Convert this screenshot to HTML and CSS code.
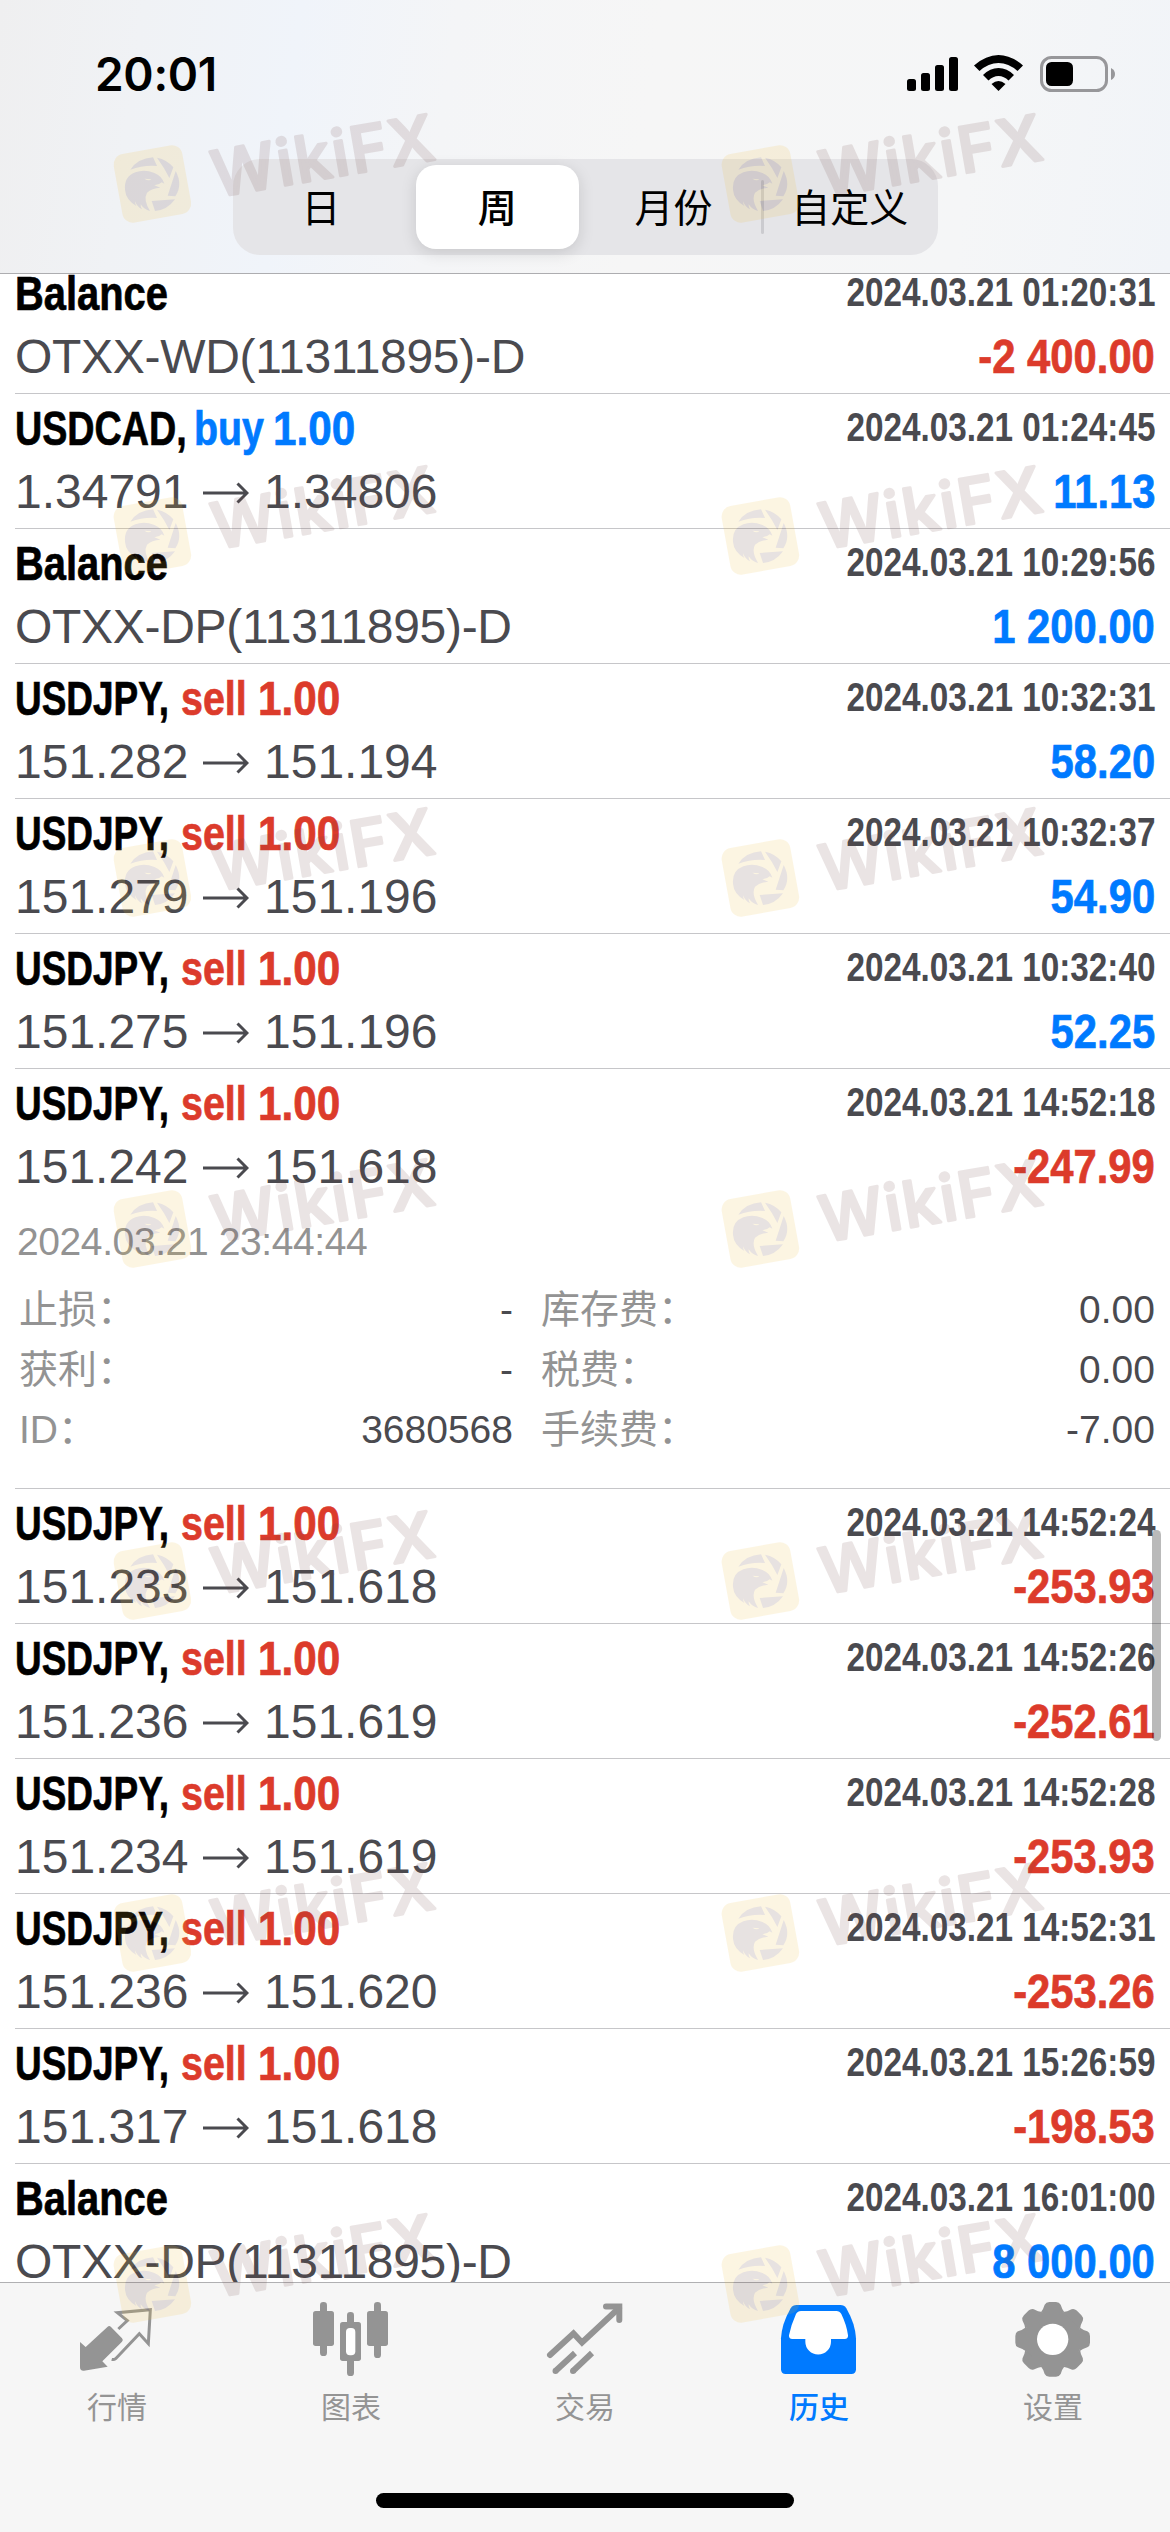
FILE: index.html
```
<!DOCTYPE html>
<html lang="zh-CN">
<head>
<meta charset="utf-8">
<title>历史</title>
<link rel="stylesheet" href="styles.css">
</head>
<body>
<svg class="defs" aria-hidden="true">
  <defs>
    <symbol id="arrow" viewBox="0 0 47 22"><path d="M1 11H45M35.5 1.5L45 11L35.5 20.5" fill="none" stroke="currentColor" stroke-width="3"/></symbol>
    <symbol id="mark" viewBox="0 90 1005 370">
      <rect x="31.500" y="222.500" width="209" height="209" rx="32" transform="rotate(-10.300 136 327)" fill="#f1be37"/>
      <g fill="#5b3730">
        <path d="M70 284Q92 250 138 247L150 273Q108 270 70 284Z"/>
        <path d="M150 248Q180 254 199 277L187 309L171 280Z"/>
        <path d="M206 288Q228 330 205 364L182 362Z"/>
        <path d="M134 378L204 373Q180 406 144 408Z"/>
        <path d="M54 345Q50 305 85 292Q112 282 142 294Q164 302 172 326L164 322Q156 330 142 331L160 338Q134 340 120 353Q108 374 129 408Q111 404 101 388Q100 397 105 403Q91 397 84 379Q84 388 88 393Q56 374 54 345Z"/>
      </g>
      <path d="M112 311L133 313Q125 319 112 311Z" fill="#f1be37"/>
      <text class="mark-text" transform="translate(327 367) rotate(-9.800)" textLength="672" lengthAdjust="spacing">WikiFX</text>
    </symbol>
  </defs>
</svg>
<div class="screen">
  <header class="header">
    <div class="status">
      <span class="clock">20:01</span>
      <svg class="status-icons" viewBox="0 0 210 40" width="210" height="40">
        <rect x="0" y="25" width="9" height="12" rx="2.500"/><rect x="14" y="19" width="9" height="18" rx="2.500"/><rect x="28" y="11" width="9" height="26" rx="2.500"/><rect x="42" y="3" width="9" height="34" rx="2.500"/>
        <path d="M67 11.500Q79 1 91.500 1T116 11.500L110.500 17Q101.500 9 91.500 9T72.500 17Z"/>
        <path d="M76 21Q83 14 91.500 14T107 21L101.500 26.500Q97 22 91.500 22T81.500 26.500Z"/>
        <path d="M84.500 30Q91.500 24 98.500 30L91.500 37Z"/>
        <rect x="134.500" y="3.500" width="65" height="33" rx="10" fill="none" stroke="#97979a" stroke-width="3"/>
        <rect x="139" y="8" width="27" height="24" rx="5.500"/>
        <path d="M204 14Q208 16 208 20T204 26Z" fill="#97979a"/>
      </svg>
    </div>
    <div class="segments">
      <span class="segment">日</span>
      <span class="segment selected">周</span>
      <span class="segment">月份</span>
      <span class="segment divided">自定义</span>
    </div>
  </header>

  <main class="list">
    <section class="row"><div class="line"><b class="symbol balance">Balance</b><time class="time">2024.03.21 01:20:31</time></div><div class="line"><span class="note">OTXX-WD(11311895)-D</span><b class="amount loss">-2 400.00</b></div></section>
    <section class="row"><div class="line"><b class="symbol cad">USDCAD,</b><b class="side buy">buy</b><b class="volume gain">1.00</b><time class="time">2024.03.21 01:24:45</time></div><div class="line"><span class="price">1.34791</span><svg class="arrow"><use href="#arrow"/></svg><span class="price">1.34806</span><b class="amount gain">11.13</b></div></section>
    <section class="row"><div class="line"><b class="symbol balance">Balance</b><time class="time">2024.03.21 10:29:56</time></div><div class="line"><span class="note">OTXX-DP(11311895)-D</span><b class="amount gain">1 200.00</b></div></section>
    <section class="row"><div class="line"><b class="symbol">USDJPY,</b><b class="side">sell</b><b class="volume loss">1.00</b><time class="time">2024.03.21 10:32:31</time></div><div class="line"><span class="price">151.282</span><svg class="arrow"><use href="#arrow"/></svg><span class="price">151.194</span><b class="amount gain">58.20</b></div></section>
    <section class="row"><div class="line"><b class="symbol">USDJPY,</b><b class="side">sell</b><b class="volume loss">1.00</b><time class="time">2024.03.21 10:32:37</time></div><div class="line"><span class="price">151.279</span><svg class="arrow"><use href="#arrow"/></svg><span class="price">151.196</span><b class="amount gain">54.90</b></div></section>
    <section class="row"><div class="line"><b class="symbol">USDJPY,</b><b class="side">sell</b><b class="volume loss">1.00</b><time class="time">2024.03.21 10:32:40</time></div><div class="line"><span class="price">151.275</span><svg class="arrow"><use href="#arrow"/></svg><span class="price">151.196</span><b class="amount gain">52.25</b></div></section>
    <section class="row open"><div class="line"><b class="symbol">USDJPY,</b><b class="side">sell</b><b class="volume loss">1.00</b><time class="time">2024.03.21 14:52:18</time></div><div class="line"><span class="price">151.242</span><svg class="arrow"><use href="#arrow"/></svg><span class="price">151.618</span><b class="amount loss">-247.99</b></div>
      <div class="details">
        <div class="closed">2024.03.21 23:44:44</div>
        <dl class="fields">
          <dt>止损：</dt><dd>-</dd><dt class="right">库存费：</dt><dd>0.00</dd>
          <dt>获利：</dt><dd>-</dd><dt class="right">税费：</dt><dd>0.00</dd>
          <dt>ID：</dt><dd>3680568</dd><dt class="right">手续费：</dt><dd>-7.00</dd>
        </dl>
      </div>
    </section>
    <section class="row"><div class="line"><b class="symbol">USDJPY,</b><b class="side">sell</b><b class="volume loss">1.00</b><time class="time">2024.03.21 14:52:24</time></div><div class="line"><span class="price">151.233</span><svg class="arrow"><use href="#arrow"/></svg><span class="price">151.618</span><b class="amount loss">-253.93</b></div></section>
    <section class="row"><div class="line"><b class="symbol">USDJPY,</b><b class="side">sell</b><b class="volume loss">1.00</b><time class="time">2024.03.21 14:52:26</time></div><div class="line"><span class="price">151.236</span><svg class="arrow"><use href="#arrow"/></svg><span class="price">151.619</span><b class="amount loss">-252.61</b></div></section>
    <section class="row"><div class="line"><b class="symbol">USDJPY,</b><b class="side">sell</b><b class="volume loss">1.00</b><time class="time">2024.03.21 14:52:28</time></div><div class="line"><span class="price">151.234</span><svg class="arrow"><use href="#arrow"/></svg><span class="price">151.619</span><b class="amount loss">-253.93</b></div></section>
    <section class="row"><div class="line"><b class="symbol">USDJPY,</b><b class="side">sell</b><b class="volume loss">1.00</b><time class="time">2024.03.21 14:52:31</time></div><div class="line"><span class="price">151.236</span><svg class="arrow"><use href="#arrow"/></svg><span class="price">151.620</span><b class="amount loss">-253.26</b></div></section>
    <section class="row"><div class="line"><b class="symbol">USDJPY,</b><b class="side">sell</b><b class="volume loss">1.00</b><time class="time">2024.03.21 15:26:59</time></div><div class="line"><span class="price">151.317</span><svg class="arrow"><use href="#arrow"/></svg><span class="price">151.618</span><b class="amount loss">-198.53</b></div></section>
    <section class="row"><div class="line"><b class="symbol balance">Balance</b><time class="time">2024.03.21 16:01:00</time></div><div class="line"><span class="note">OTXX-DP(11311895)-D</span><b class="amount gain">8 000.00</b></div></section>
  </main>

  <nav class="tabs">
    <div class="tab">
      <svg class="icon" viewBox="51 30 240 234"><path d="M60 156L77 171L143 110Q148 106 153 111L186 145Q191 150 186 155L127 214L143 230L72 242Q60 243 60 232Z" fill="currentColor"/><path d="M175 117L202 92L172 68L271 59L265 161L238 131L167 206Q162 210 155 208" fill="none" stroke="currentColor" stroke-width="9"/></svg>
      <span>行情</span>
    </div>
    <div class="tab">
      <svg class="icon" viewBox="753 30 240 234" fill="currentColor"><rect x="780" y="36" width="21" height="162" rx="10"/><rect x="759" y="63" width="63" height="105" rx="8"/><rect x="861" y="66" width="21" height="192" rx="10"/><rect x="840" y="96" width="63" height="117" rx="8"/><rect x="858" y="114" width="28" height="82" rx="12" fill="#fff"/><rect x="942" y="36" width="21" height="168" rx="10"/><rect x="921" y="63" width="63" height="105" rx="8"/></svg>
      <span>图表</span>
    </div>
    <div class="tab">
      <svg class="icon" viewBox="545 2300 80 78" fill="none" stroke="currentColor" stroke-width="6"><path d="M550 2355L573.500 2333.500L582 2342.500L619 2308" stroke-linecap="round"/><path d="M606 2306.500H619.300V2320" stroke-linecap="round"/><path d="M555.500 2371L575 2353M573 2371L592 2353" /><path d="M555.500 2371h.01M573 2371h.01" stroke-linecap="round"/></svg>
      <span>交易</span>
    </div>
    <div class="tab active">
      <svg class="icon" viewBox="177 30 240 234"><path d="M183 145Q185 102 212 55Q218 45 230 45H361Q373 45 379 55Q406 102 408 145V238Q408 252 394 252H197Q183 252 183 238Z" fill="currentColor"/><path d="M243 63H349Q359 63 364 72Q380 105 384 136Q385 147 374 147H333V155A38.500 38.500 0 0 1 256 155V147H217Q206 147 207 136Q213 105 228 72Q233 63 243 63Z" fill="#fff"/></svg>
      <span>历史</span>
    </div>
    <div class="tab">
      <svg class="icon" viewBox="-119 -118 240 234"><defs><path id="tooth" d="M-36-80Q-28-90-24-104Q-20-112-10-112H10Q20-112 24-104Q28-90 36-80Z"/></defs><g fill="currentColor"><circle r="87"/><use href="#tooth"/><use href="#tooth" transform="rotate(45)"/><use href="#tooth" transform="rotate(90)"/><use href="#tooth" transform="rotate(135)"/><use href="#tooth" transform="rotate(180)"/><use href="#tooth" transform="rotate(225)"/><use href="#tooth" transform="rotate(270)"/><use href="#tooth" transform="rotate(315)"/></g><circle r="47" fill="#fff"/></svg>
      <span>设置</span>
    </div>
    <div class="home"></div>
  </nav>

  <div class="scrollbar"></div>
  <div class="marks" aria-hidden="true">
    <svg style="top:105px"><use href="#mark"/></svg><svg class="second" style="top:105px"><use href="#mark"/></svg>
    <svg style="top:457px"><use href="#mark"/></svg><svg class="second" style="top:457px"><use href="#mark"/></svg>
    <svg style="top:799px"><use href="#mark"/></svg><svg class="second" style="top:799px"><use href="#mark"/></svg>
    <svg style="top:1150px"><use href="#mark"/></svg><svg class="second" style="top:1150px"><use href="#mark"/></svg>
    <svg style="top:1502px"><use href="#mark"/></svg><svg class="second" style="top:1502px"><use href="#mark"/></svg>
    <svg style="top:1854px"><use href="#mark"/></svg><svg class="second" style="top:1854px"><use href="#mark"/></svg>
    <svg style="top:2205px"><use href="#mark"/></svg><svg class="second" style="top:2205px"><use href="#mark"/></svg>
  </div>
</div>
</body>
</html>
```
FILE: styles.css
```
* { box-sizing: border-box; }

body {
  margin: 0;
  background: #fff;
  font-family: "Liberation Sans", "Noto Sans CJK SC", sans-serif;
  color: #4a4a4f;
}

.defs { position: absolute; width: 0; height: 0; }

.screen {
  position: relative;
  width: 1170px;
  height: 2532px;
  display: flex;
  flex-direction: column;
  overflow: hidden;
}

/* Header */
.header {
  flex: none;
  height: 274px;
  border-bottom: 1px solid #adadb0;
  background: linear-gradient(98deg, #efeff0 0%, #f0f2f5 12%, #f0f4fa 25%, #f4f5f7 38%, #f6f6f6 55%, #f5f6f7 82%, #f1f4f8 100%);
}

.status {
  height: 159px;
  display: flex;
  justify-content: space-between;
  align-items: flex-start;
  padding: 54px 53px 0 95px;
}

.clock {
  font: 600 46px/40px "Inter", sans-serif;
  letter-spacing: -0.3px;
  color: #000;
}

.segments {
  width: 705px;
  height: 96px;
  margin-left: 233px;
  display: grid;
  grid-template-columns: repeat(4, 1fr);
  border-radius: 27px;
  background: #e5e5e8;
}

.segment {
  display: flex;
  align-items: center;
  justify-content: center;
  padding-bottom: 5px;
  font: 400 39px/56px "Noto Sans CJK SC", sans-serif;
  color: #000;
}

.selected {
  margin: 6px 7px;
  border-radius: 20px;
  background: #fff;
  font-weight: 500;
  box-shadow: 0 4px 16px rgba(0, 0, 0, .13);
}

.divided { position: relative; }

.divided::before {
  content: "";
  position: absolute;
  left: -1px;
  top: 21px;
  width: 3px;
  height: 54px;
  border-radius: 2px;
  background: #cbcbcf;
}

/* Deals */
.list { flex: 1; min-height: 0; overflow: hidden; }

.row {
  height: 135px;
  margin-left: 15px;
  padding: 8px 15px 0 0;
  border-bottom: 1px solid #c6c6c9;
}

.row:first-child { margin-top: -15px; }
.row.open { height: 420px; }

.line {
  height: 54px;
  display: flex;
  align-items: flex-start;
  font-size: 48px;
  line-height: 54px;
  white-space: nowrap;
}

.line + .line { margin-top: 9px; }

/* Condensed faces: each box has its drawn width, the glyphs are squeezed into it */
.symbol, .side, .volume { transform-origin: left; color: #000; }
.symbol, .side, .volume, .amount { -webkit-text-stroke: .7px currentColor; }
.symbol { width: 166px; transform: scaleX(.77); }
.symbol.balance { transform: scaleX(.83); }
.symbol.cad { width: 179px; transform: scaleX(.785); }
.side { width: 77px; transform: scaleX(.82); color: #dc3b2b; }
.side.buy { width: 79px; color: #007aff; }
.volume { width: 90px; transform: scaleX(.88); }
.volume.gain, .amount.gain { color: #007aff; }
.volume.loss, .amount.loss { color: #dc3b2b; }

.time {
  margin-left: auto;
  font-size: 40px;
  font-weight: 700;
  line-height: 51px;
  transform: scaleX(.832);
  transform-origin: right;
}

.amount { margin-left: auto; transform: scaleX(.87); transform-origin: right; }

.note { letter-spacing: -.3px; }
.price { width: 172px; }
.arrow { width: 47px; height: 22px; margin: 17px 15px 0; }

/* Expanded deal */
.details { padding-top: 26px; font-size: 39px; }
.closed { padding-left: 2px; line-height: 44px; letter-spacing: -.4px; color: #939393; }

.fields {
  margin: 16px 0 0;
  padding-left: 4px;
  display: grid;
  grid-template-columns: 160px 334px 200px 1fr;
  line-height: 60px;
}

.fields dt { height: 60px; color: #939393; }
.fields .right { padding-left: 28px; }
.fields dd { height: 60px; margin: 0; text-align: right; }

/* Tab bar */
.tabs {
  flex: none;
  height: 250px;
  display: grid;
  grid-template-columns: repeat(5, 1fr);
  grid-template-rows: 210px 15px;
  border-top: 1px solid #b0b0b2;
  background: #f6f6f6;
}

.tab {
  display: flex;
  flex-direction: column;
  align-items: center;
  padding-top: 17px;
  color: #949494;
  font: 400 30px/44px "Noto Sans CJK SC", sans-serif;
}

.tab span { margin-top: 5px; }
.active { color: #007aff; font-weight: 500; }
.icon { width: 80px; height: 78px; }

.home {
  grid-column: 1 / -1;
  justify-self: center;
  width: 418px;
  border-radius: 8px;
  background: #000;
}

/* Overlays */
.scrollbar {
  position: absolute;
  left: 1152px;
  top: 1530px;
  width: 9px;
  height: 211px;
  border-radius: 5px;
  background: rgba(0, 0, 0, .27);
}

.marks { position: absolute; inset: 0; pointer-events: none; }
.marks svg { position: absolute; left: 107px; width: 335px; height: 123.3px; opacity: .14; }
.marks .second { left: 715px; }

.mark-text {
  font: 500 190px "Inter", sans-serif;
  fill: #704646;
  stroke: #704646;
  stroke-width: 9px;
  stroke-linejoin: round;
}
```
